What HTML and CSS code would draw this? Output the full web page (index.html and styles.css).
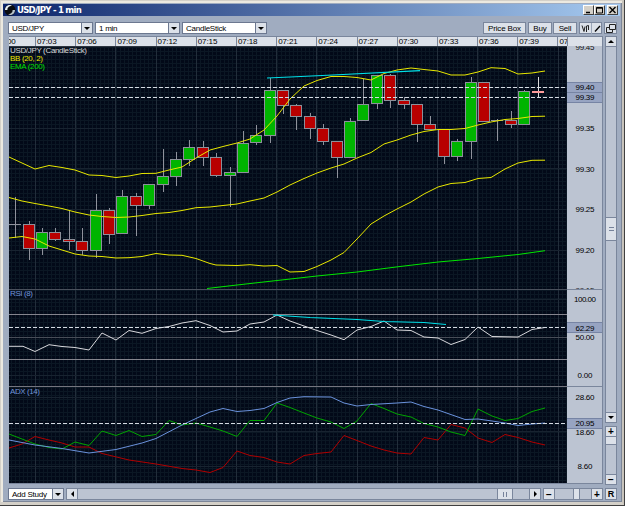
FILE: index.html
```html
<!DOCTYPE html>
<html lang="en">
<head>
    <meta charset="UTF-8">
    <title>USD/JPY - 1 min</title>
    <link rel="stylesheet" href="styles.css">
</head>
<body>
<div class="window">
    <div class="titlebar">
        <svg class="logo" width="12" height="12" viewBox="0 0 12 12">
            <circle cx="6" cy="6" r="5.5" fill="#0a0c10"/>
            <path d="M1 6C1 2 5 0 8 1.5C5 2 3 4 3.5 6Z" fill="#e8f0f4"/>
            <path d="M11 6C11 10 7 12 4 10.5C7 10 9 8 8.5 6Z" fill="#b8c4cc"/>
        </svg>
        <span class="title">USD/JPY - 1 min</span>
        <div class="win-buttons">
            <span class="win-btn"><svg width="9" height="8"><path d="M2 6.5H6" stroke="#000" stroke-width="1.5"/></svg></span>
            <span class="win-btn"><svg width="9" height="8"><path d="M1.5 1.5H7.5V7H1.5ZM1.5 2.2H7.5" fill="none" stroke="#000"/></svg></span>
            <span class="win-btn close"><svg width="9" height="8"><path d="M1.5 1L7.5 7M7.5 1L1.5 7" stroke="#000" stroke-width="1.4"/></svg></span>
        </div>
    </div>

    <div class="toolbar">
        <div class="select"><span>USD/JPY</span><i><b class="down"></b></i></div>
        <div class="select"><span>1 min</span><i><b class="down"></b></i></div>
        <div class="select"><span>CandleStick</span><i><b class="down"></b></i></div>
        <div class="actions">
            <div class="btn price-box">Price Box</div>
            <div class="btn buy">Buy</div>
            <div class="btn sell">Sell</div>
            <div class="btn tools">
                <svg width="12" height="11"><path d="M2 2.5L4 8.5L5 3.5M6.5 9V3L8.5 2.5V7" fill="none" stroke="#222"/></svg>
                <svg width="11" height="11"><path d="M3 8.5L8 3" stroke="#000" stroke-width="1.3"/></svg>
            </div>
            <div class="btn popout">
                <svg width="12" height="11"><path d="M4.5 1.5H10.5V6.5H4.5ZM4 4.5H1.5V9.5H7.5V7" fill="none" stroke="#222"/></svg>
            </div>
        </div>
    </div>

    <div class="main">
        <div class="chart">
            <div class="ruler">
                <div class="times">
                    <span class="first">00</span><span>07:03</span><span>07:06</span><span>07:09</span><span>07:12</span><span>07:15</span><span>07:18</span><span>07:21</span><span>07:24</span><span>07:27</span><span>07:30</span><span>07:33</span><span>07:36</span><span>07:39</span><span>07:42</span>
                </div>
            </div>
            <svg id="plot" class="plot" width="594" height="438" viewBox="9 46 594 438"></svg>
        </div>
        <div class="side">
            <div class="vscroll">
                <i><b class="up"></b></i>
                <div class="track"></div>
                <div class="thumb grip"></div>
                <div class="track lower"></div>
                <i><b class="down"></b></i>
            </div>
            <div class="vzoom">
                <i>+</i>
                <div class="thumb"></div>
                <div class="track"></div>
                <i>−</i>
            </div>
        </div>
    </div>

    <div class="bottombar">
        <div class="select study"><span>Add Study</span><i><b class="down"></b></i></div>
        <div class="hscroll">
            <i><b class="left"></b></i>
            <div class="track"></div>
            <div class="thumb grip"></div>
            <div class="track end"></div>
            <i><b class="right"></b></i>
        </div>
        <div class="hzoom">
            <i>−</i>
            <div class="track wide"></div>
            <div class="thumb"></div>
            <div class="track"></div>
            <i>+</i>
        </div>
        <div class="btn reset">R</div>
    </div>
</div>
<script src="chart.js"></script>
</body>
</html>
```
FILE: styles.css
```css
* {
    box-sizing: border-box;
}
body {
    margin: 0;
    width: 625px;
    height: 506px;
    overflow: hidden;
    background: #404040;
    font-family: "Liberation Sans", Arial, sans-serif;
    font-size: 8px;
    color: #000;
}
.window {
    width: 624px;
    height: 505px;
    padding: 3px 2px 0 3px;
    background: #a0acc0;
    border: 1px solid #d4d0c8;
    border-right: 2px solid #c8c4bc;
    border-bottom: 3px solid #d4d0c8;
    box-shadow: inset 2px 2px 0 #ece9e0, inset -1px -1px 0 #7c8698;
}
svg {
    display: block;
}
i {
    display: flex;
    align-items: center;
    justify-content: center;
    flex: none;
    font-style: normal;
    background: #dce1e9;
}

/* title bar */
.titlebar {
    display: flex;
    align-items: center;
    height: 12px;
    margin-left: -1px;
    padding: 0 2px 0 1px;
    background: linear-gradient(to right, #0c246a, #a6caf0);
}
.title {
    margin-left: 1px;
    font: bold 9.5px/12px "DejaVu Sans Condensed", "DejaVu Sans", sans-serif;
    font-stretch: condensed;
    letter-spacing: -0.75px;
    color: #fff;
}
.win-buttons {
    display: flex;
    margin-left: auto;
}
.win-btn {
    width: 11px;
    height: 10px;
    background: #d4d0c8;
    border: 1px solid #fff;
    border-right-color: #404040;
    border-bottom-color: #404040;
}
.win-btn.close {
    margin-left: 2px;
}

/* toolbar */
.toolbar {
    display: flex;
    gap: 2px;
    height: 20px;
    padding: 6px 3px 0 4px;
}
.select {
    display: flex;
    width: 85px;
    height: 12px;
    border: 1px solid #6c7890;
    background: #fff;
    line-height: 11px;
}
.select span {
    flex: 1;
    padding-left: 3px;
    letter-spacing: -0.25px;
    white-space: nowrap;
}
.select i {
    width: 11px;
    border-left: 1px solid #6c7890;
}
.actions {
    display: flex;
    margin-left: auto;
}
.btn {
    height: 12px;
    border: 1px solid #7a869c;
    background: #dce1e9;
    line-height: 11px;
    letter-spacing: -0.15px;
    text-align: center;
    white-space: nowrap;
}
.price-box { width: 43px; margin-right: 2px; }
.buy { width: 24px; margin-right: 1px; }
.sell { width: 24px; margin-right: 2px; }
.tools { display: flex; width: 23px; margin-right: 2px; }
.tools svg + svg { border-left: 1px solid #9aa5b8; }
.popout { width: 13px; }

b {
    width: 0;
    height: 0;
    border: 3px solid transparent;
}
.down { border-top-color: #000; border-bottom: 0; }
.up { border-bottom-color: #000; border-top: 0; }
.left { border-right-color: #000; border-left: 0; }
.right { border-left-color: #000; border-right: 0; }

/* chart */
.main {
    display: flex;
    gap: 2px;
    padding-left: 5px;
}
.chart {
    width: 594px;
    height: 448px;
    background: #bcc4d2;
}
.ruler {
    height: 10px;
    background: #dce1e9;
    border-top: 1px solid #7a869c;
    border-right: 1px solid #7a869c;
}
.times {
    display: flex;
    width: 559px;
    height: 9px;
    overflow: hidden;
    border-right: 1px solid #7a869c;
    line-height: 10px;
    letter-spacing: -0.1px;
}
.times span {
    flex: none;
    width: 40.2px;
    padding-left: 1px;
    border-left: 1px solid #7a869c;
}
.times .first {
    width: 26px;
    padding: 0;
    border: 0;
    text-indent: -2px;
}
.plot text {
    font-size: 8px;
}

/* scrollbars */
.side {
    width: 12px;
}
.vscroll, .vzoom {
    display: flex;
    flex-direction: column;
    border: 1px solid #7a869c;
    background: #bcc4d2;
}
.vscroll {
    height: 387px;
}
.vzoom {
    height: 59px;
    margin-top: 3px;
}
.vscroll i, .vzoom i {
    height: 10px;
    border-bottom: 1px solid #7a869c;
}
.vscroll i:last-child, .vzoom i:last-child {
    border-bottom: 0;
    border-top: 1px solid #7a869c;
}
.track {
    flex: 1;
}
.vscroll .track {
    flex: 0 0 170px;
}
.vscroll .lower {
    flex: 1;
}
.thumb {
    flex: none;
    background: #dce1e9;
}
.vscroll .thumb {
    height: 24px;
    border: 1px solid #7a869c;
    border-width: 1px 0;
}
.vzoom .thumb {
    height: 8px;
    border-bottom: 1px solid #7a869c;
}
.grip {
    display: flex;
    align-items: center;
    justify-content: center;
}
.vscroll .grip::after {
    content: "";
    width: 5px;
    height: 2px;
    border: 1px solid #76829a;
    border-width: 1px 0;
}
.vzoom i, .hzoom i {
    font-size: 10px;
    font-weight: bold;
    line-height: 9px;
}

/* bottom row */
.bottombar {
    display: flex;
    margin: 3px 3px 0 4px;
    height: 12px;
}
.study {
    width: 56px;
    margin-right: 2px;
}
.hscroll, .hzoom {
    display: flex;
    height: 12px;
    border: 1px solid #7a869c;
    background: #bcc4d2;
}
.hscroll {
    width: 475px;
    margin-right: 2px;
}
.hzoom {
    width: 60px;
    margin-right: 2px;
}
.hscroll i, .hzoom i {
    width: 11px;
    border-right: 1px solid #7a869c;
}
.hscroll i:last-child, .hzoom i:last-child {
    border-right: 0;
    border-left: 1px solid #7a869c;
}
.hscroll .thumb {
    width: 16px;
    border: 1px solid #7a869c;
    border-width: 0 1px;
}
.hscroll .end {
    flex: 0 0 16px;
}
.hscroll .grip::after {
    content: "";
    width: 2px;
    height: 5px;
    border: 1px solid #76829a;
    border-width: 0 1px;
}
.hzoom .thumb {
    width: 7px;
    border: 1px solid #7a869c;
    border-width: 0 1px;
}
.hzoom .wide {
    flex: 0 0 18px;
}
.reset {
    width: 12px;
    font-weight: bold;
    font-size: 9px;
}
```
FILE: chart.js
```js
const plot = document.getElementById("plot");
let out = "";

function rect(x, y, w, h, fill, extra = "") {
    out += `<rect x="${x}" y="${y}" width="${w}" height="${h}" fill="${fill}" ${extra}/>`;
}
function hline(y, color, x1 = 9, x2 = 567) {
    rect(x1, y, x2 - x1, 1, color);
}
function line(points, color, width = 1) {
    out += `<polyline points="${points}" fill="none" stroke="${color}" stroke-width="${width}"/>`;
}
function text(x, y, str, color, len, anchor = "start") {
    out += `<text x="${x}" y="${y}" fill="${color}" text-anchor="${anchor}" textLength="${len}">${str}</text>`;
}

// background and grid
rect(9, 46, 558, 438, "#020918");
for (let i = 0; i < 139; i++) rect(Math.round(11.2 + i * 4.02), 46, 1, 438, "#0b1724");
for (let y = 47; y < 484; y += 4.05) hline(Math.round(y), "#0b1724");
for (let i = 0; i < 14; i++) rect(Math.round(35 + i * 40.2), 46, 1, 438, "#222d3a");
[87, 128, 168, 209, 250].forEach(y => hline(y, "#182330"));
[299, 375, 397, 431, 466].forEach(y => hline(y, "#182330"));
hline(46, "#2c3440");
hline(289, "#4a505c");
hline(337, "#484e58");
hline(314, "#85858e");
hline(359, "#85858e");
hline(386, "#74747e");

// candles: [open/close top, bottom, wick top, wick bottom, up]
const candles = [
    [224, 224, 197, 238, 0], [224, 248, 221, 260, 0], [232, 248, 228, 255, 1], [232, 239, 228, 241, 0],
    [239, 241, 210, 250, 0], [241, 250, 228, 255, 0], [210, 250, 194, 258, 1], [210, 234, 208, 244, 0],
    [196, 233, 190, 234, 1], [196, 205, 193, 236, 0], [184, 205, 184, 209, 1], [176, 184, 149, 192, 1],
    [159, 176, 152, 186, 1], [147, 159, 140, 166, 1], [147, 157, 141, 166, 0], [157, 175, 153, 177, 0],
    [172, 175, 167, 207, 1], [143, 172, 131, 172, 1], [135, 142, 125, 145, 1], [90, 135, 78, 143, 1],
    [90, 105, 90, 114, 0], [105, 116, 104, 130, 0], [116, 128, 113, 139, 0], [128, 141, 124, 145, 0],
    [141, 157, 141, 178, 0], [121, 157, 118, 157, 1], [104, 120, 79, 120, 1], [75, 103, 75, 109, 1],
    [75, 100, 74, 108, 0], [100, 104, 97, 109, 0], [104, 124, 104, 142, 0], [124, 129, 116, 129, 0],
    [129, 156, 129, 164, 0], [141, 156, 139, 161, 1], [82, 141, 77, 159, 1], [82, 121, 82, 121, 0],
    [120, 120, 119, 141, 0], [120, 124, 111, 128, 0], [91, 124, 90, 124, 1]
];
candles.forEach(([top, bottom, high, low, up], i) => {
    const x = Math.round(9.3 + i * 13.39);
    rect(x + 6, high, 1, low - high, "#8f929c");
    if (top === bottom) {
        rect(x, top, 12, 1, "#8f929c");
    } else {
        rect(x + 0.5, top + 0.5, 11, bottom - top, up ? "#00b400" : "#b80000", 'stroke="#8c909a"');
    }
});
rect(538, 77, 1, 20, "#ddd");
rect(532, 91, 12, 2, "#ff9c9c");

// Bollinger bands
line("9,157 22,163 35,169 49,165.5 62,167.5 75,170 89,175 102,175.5 116,177.5 129,176 142,173.5 156,173.3 169,170 182,167 196,158 210,150 223,146.5 237,143 250,139 264,130 277,116 290,99 304,86 317,80.5 331,76.5 344,76.5 357,77.5 371,80 384,73.5 397,70 411,68 424,69.5 438,71 451,75 465,75 478,72 491,67.7 505,68.5 518,74 532,73 545,71", "#e8e800");
line("9,197.5 22,201 35,203.5 49,206 62,208.5 75,212 89,215 102,216.5 116,217.5 129,217 142,215.5 156,213.5 169,212.5 182,210.5 196,207.7 210,207 223,205.5 237,204 250,201 264,198 277,192 290,185 304,178.5 317,173 331,168 344,164 357,158 371,152.5 384,144 397,140 411,135 424,131.5 438,129.5 451,129.5 465,128.5 478,125 491,122 505,119.5 518,118.5 532,116.5 545,116.2", "#e8e800");
line("9,238 22,236.5 35,239 49,246 62,250 75,254 89,256 102,256.5 116,258 129,257.7 142,256.5 156,253.5 169,255 182,255.3 196,258.5 210,263.5 216,265 237,265.5 250,264.7 264,266 277,265.5 290,272 304,271.5 317,266.5 331,260 344,252.5 357,239 371,224 384,216 397,209 411,202 424,194 438,187 451,183.5 465,182.5 478,178.5 491,177.5 505,169 518,163 532,160.3 545,160.2", "#e8e800");

// EMA
line("207,288.5 237,285 277,280.5 317,276 357,272 400,266.5 438,262 478,258.5 518,254.5 545,250.7", "#00e800");

// RSI
line("9,346.3 23,346.3 35,351.5 49,344.7 62,346.5 75,347.5 89,350 102,333 116,340 129,330.5 142,333.3 156,328.5 169,326.5 182,323 196,320.7 210,325.5 223,332 237,331 250,324 264,322 277,315 290,321 304,326 317,330.5 331,335 344,339.7 357,330 371,326.5 384,321 397,330 411,330.5 424,337 438,338 451,344.5 465,339.5 478,327 492,336.5 518,337 532,329.5 545,327.5", "#d8d8dc");

// ADX, +DI, -DI
line("9,448 22,444 35,436.5 49,440 62,443 75,447 89,447 102,453.5 129,460 156,464 182,468.5 196,470 210,472.5 223,467.5 237,451 250,455.5 264,457.5 277,462 290,464 304,455.5 317,453.5 331,452 344,435.5 357,440.5 371,446 384,450 397,453 411,454 424,437.5 438,440 451,424.5 465,428 478,438 492,442.5 505,434.5 518,437.5 532,442 545,445", "#b00000");
line("9,434 22,439 35,444 49,447.5 62,449 75,442 89,445.5 102,431 116,435.5 129,430.5 142,436.5 156,434.5 169,420.5 182,425 196,423 210,427 223,431 237,436.5 250,420.5 264,420.5 277,403 290,407.5 304,413 317,418 331,422 344,428.5 357,421 371,403.5 384,408.5 397,414 411,417 424,423.5 438,427 451,432 465,435.5 478,409 492,416 505,420.5 518,418.5 532,411.5 545,408", "#00a400");
line("9,440 35,445 62,448.5 89,453 116,449.5 142,443 156,438.5 182,425 210,412 223,408.5 237,411.5 250,410.5 264,408.5 277,402.5 290,398 304,396.7 331,397 344,403 357,406 371,404.5 397,403 411,402 424,406.5 438,410 465,419.5 478,419 492,421 505,423 518,425.5 532,424 545,423", "#6a92dc");

// trend lines
line("267,78 290,77 333,75 420,70.7", "#00e0e8", 1.2);
line("273,315 310,317.5 357,319.5 384,321.5 424,322.5 446,324.5", "#00e0e8", 1.2);

// current value markers
[87, 97, 327, 423].forEach(y => {
    out += `<path d="M9 ${y + 0.5}H567" stroke="#d4dae2" stroke-dasharray="4 2"/>`;
});

text(10, 52.5, "USD/JPY (CandleStick)", "#d8d8d8", 77);
text(10, 60.5, "BB (20, 2)", "#e8e800", 33);
text(10, 68.5, "EMA (200)", "#00e000", 35);
text(10, 296, "RSI (8)", "#7094d8", 23);
text(10, 393.5, "ADX (14)", "#7094d8", 30);

// price axis
rect(567, 46, 36, 438, "#bcc4d2");
rect(602, 46, 1, 438, "#7a869c");
text(585, 50, "99.45", "#111", 19, "middle");
text(585, 293, "99.15", "#111", 19, "middle");
rect(567, 289, 35, 6, "#bcc4d2");
[289, 386].forEach(y => hline(y, "#7a869c", 567, 603));
[[82, 10], [92, 10], [322, 10], [418, 10]].forEach(([y, h]) => {
    rect(567, y, 35, h, "#97a4c2");
    hline(y, "#7684a4", 567, 602);
    hline(y + h, "#7684a4", 567, 602);
});
[
    ["99.40", 87.5], ["99.39", 97.5], ["99.35", 128], ["99.30", 169], ["99.25", 209], ["99.20", 250.5],
    ["100.00", 299.5], ["62.29", 328], ["50.00", 337.2], ["0.00", 375.3],
    ["28.60", 397], ["20.95", 423.2], ["18.60", 431.8], ["8.60", 466.3]
].forEach(([label, y]) => {
    const len = label.length === 6 ? 22 : label.length === 4 ? 15 : 19;
    text(585, y + 2.8, label, "#000", len, "middle");
});
rect(9, 483, 594, 1, "#7a869c");

plot.innerHTML = out;
```
